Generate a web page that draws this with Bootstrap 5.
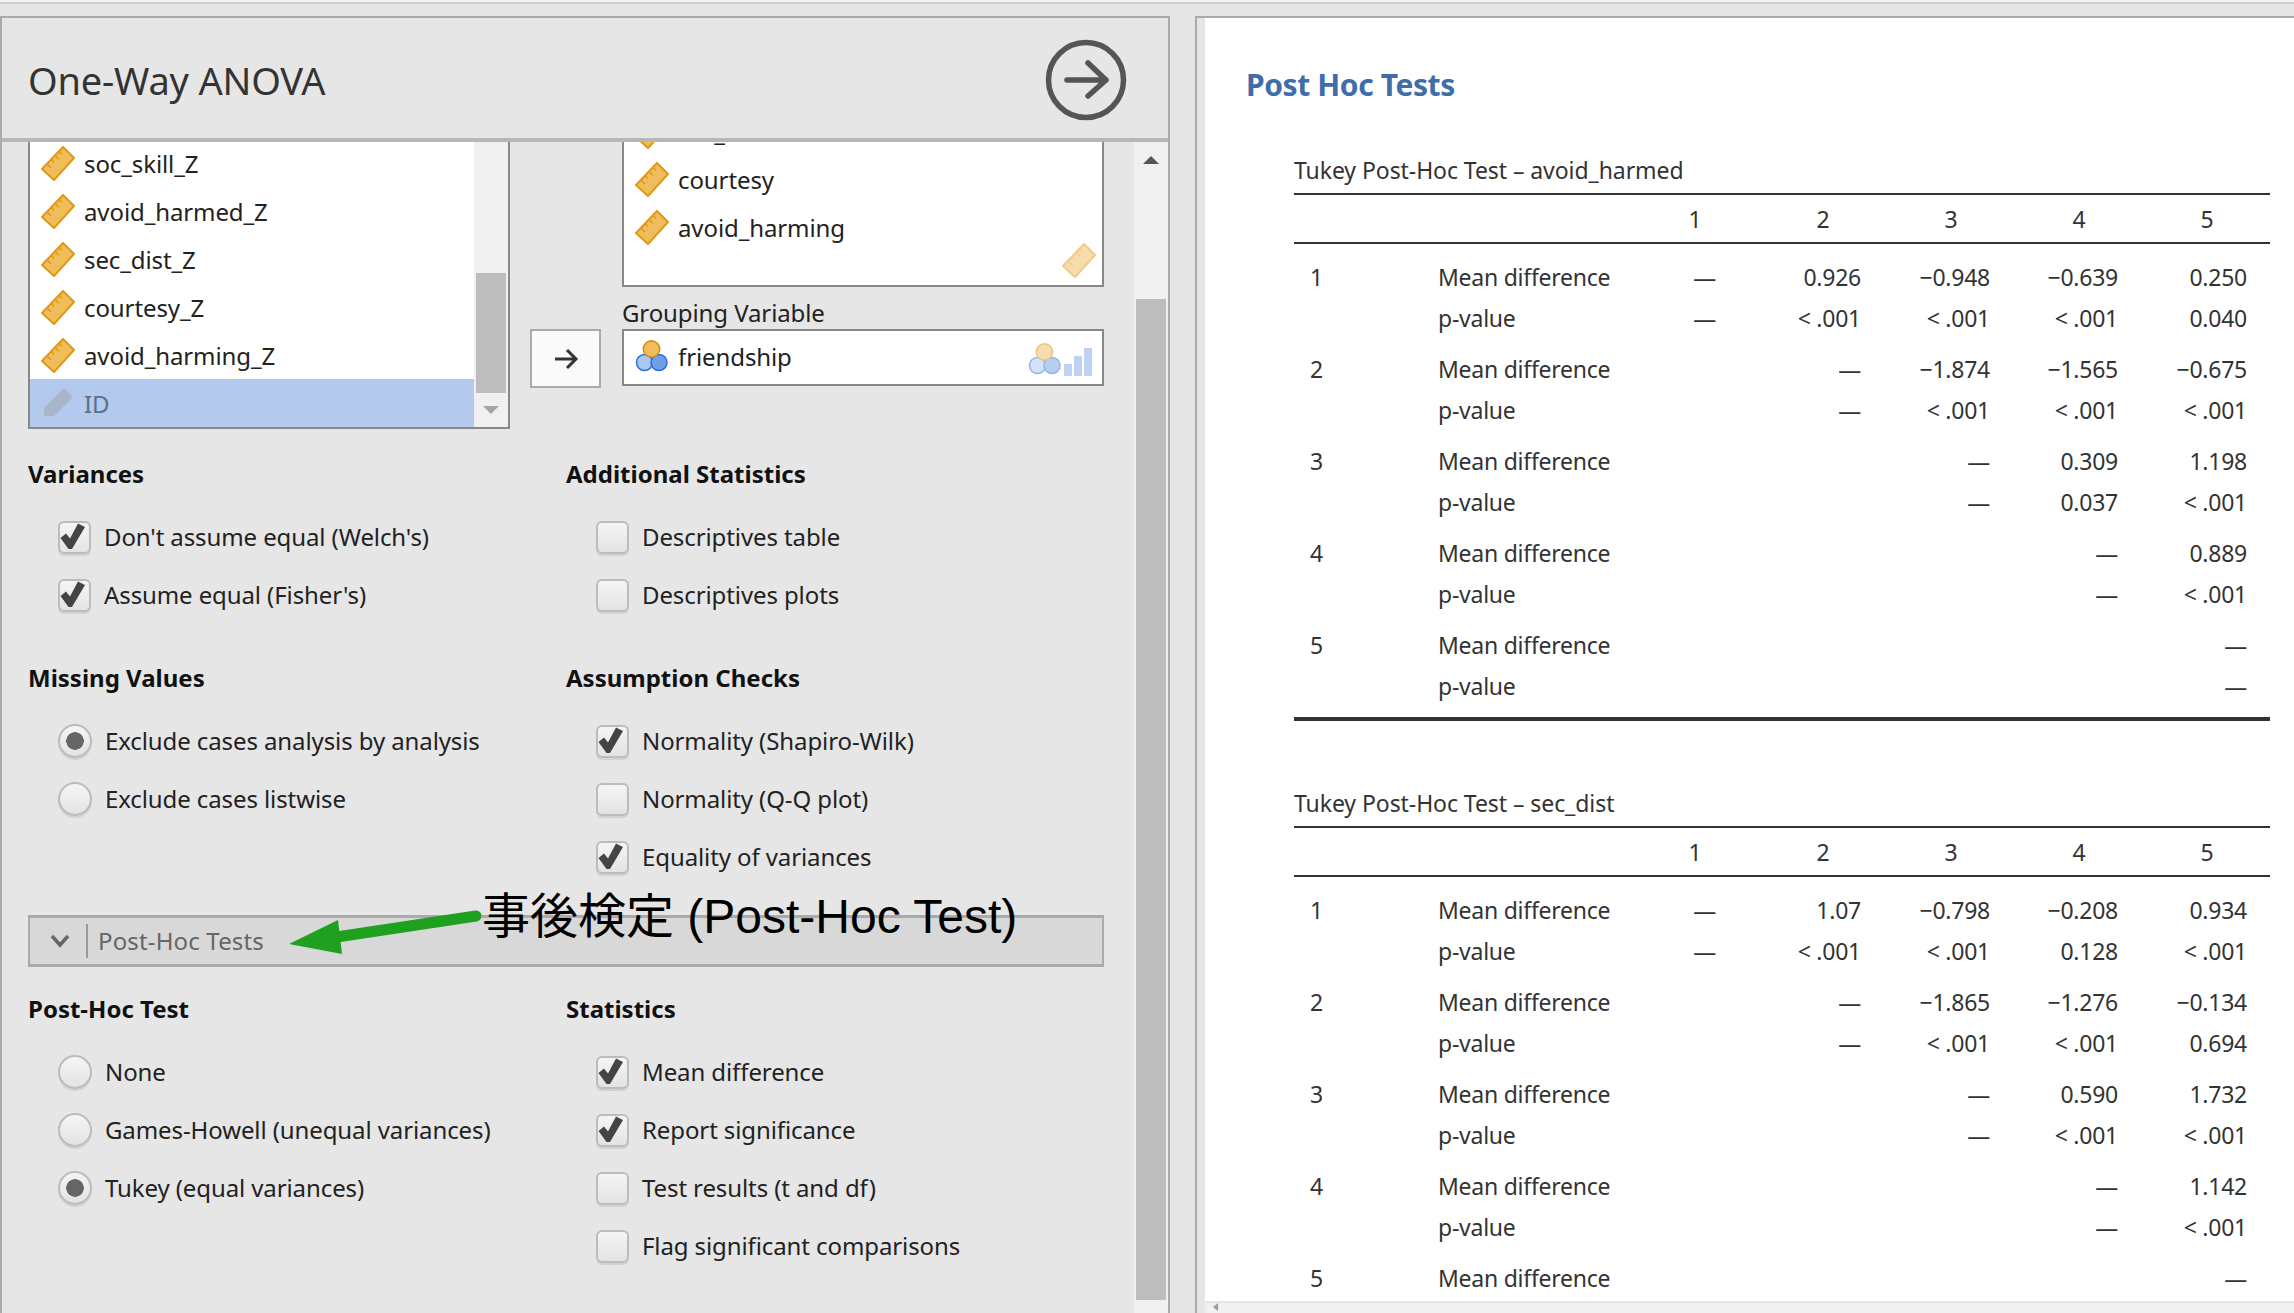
<!DOCTYPE html>
<html lang="en">
<head>
  <meta charset="UTF-8" />
  <meta name="viewport" content="width=device-width, initial-scale=1.0" />
  <title>One-Way ANOVA</title>
  <link href="https://cdn.jsdelivr.net/npm/bootstrap@5.3.0/dist/css/bootstrap.min.css" rel="stylesheet">
  <style>
    html, body { height: 1313px; overflow: hidden; }
    body {
      background: #e6e6e6;
      color: #222;
      font-family: "Noto Sans", "Open Sans", sans-serif;
      font-size: 24px;
      letter-spacing: -0.1px;
      line-height: 32px;
    }
    .top-strip { height: 4px; background: #f2f2f2; border-bottom: 2px solid #cfcfcf; margin-bottom: 12px; }
    .work-area { height: 1297px; }

    /* left options panel */
    .opt-panel { width: 1170px; border: 2px solid #aaa; border-bottom: 0; }
    .opt-head { height: 124px; border-bottom: 4px solid #b7b7b7; padding: 4px 0 0 26px; flex: none; }
    .opt-head h1 { font-size: 38px; font-weight: 400; color: #333; margin: 2px 0 0; letter-spacing: -0.2px; }
    .run-icon { width: 84px; height: 84px; margin-right: 40px; }
    .opt-scroll { min-height: 0; }
    .opt-body { width: 1132px; padding-left: 26px; padding-right: 30px; overflow: hidden; }
    .main-track { width: 34px; background: #f0f0f0; }
    .tri-box { height: 36px; }
    .tri-up { width: 0; height: 0; border-left: 8px solid transparent; border-right: 8px solid transparent; border-bottom: 8px solid #555; }
    .main-thumb { width: 30px; height: 1001px; background: #bdbdbd; margin-bottom: 13px; }

    /* variable lists */
    .var-row { height: 287px; flex: none; margin-top: 0; }
    .src-list { width: 482px; height: 287px; background: #fff; border: 2px solid #888; border-top: 0; overflow: hidden; margin-top: 0; flex: none; }
    .src-rows { width: 445px; margin-top: -3px; }
    .var-item { height: 48px; padding: 2px 0 0 11px; gap: 9px; }
    .var-item svg { flex: none; margin-top: -2px; }
    .var-item.picked { background: #b3c9ee; color: #5b6f8c; }
    .list-track { width: 34px; background: #f0f0f0; }
    .list-thumb { width: 30px; height: 120px; background: #bdbdbd; }
    .tri-box-s { height: 34px; }
    .tri-down { width: 0; height: 0; border-left: 8px solid transparent; border-right: 8px solid transparent; border-top: 8px solid #a5a5a5; }
    .move-btn { width: 71px; height: 59px; margin: 187px 21px 0 20px; background: #fafafa; border: 2px solid #aaa; border-radius: 0; padding: 0; flex: none; }
    .move-btn:hover { background: #fafafa; border-color: #aaa; }
    .dst-col { width: 482px; flex: none; }
    .dst-list { height: 145px; background: #fff; border: 2px solid #888; border-top: 0; overflow: hidden; }
    .dst-rows { margin-top: -35px; }
    .ghost-ruler { position: absolute; right: 6px; bottom: 7px; opacity: .5; }
    .group-label { line-height: 32px; margin-top: 10px; color: #222; font-size: 24px; }
    .group-box { height: 57px; background: #fff; border: 2px solid #888; }
    .group-box .var-item { height: 53px; padding: 0 0 2px 11px; }
    .ghost-types { position: absolute; right: 9px; bottom: 8px; opacity: .5; gap: 2px; }

    /* option groups */
    .opt-title { font-size: 24px; font-weight: 700; line-height: 32px; margin: 0 0 18px; color: #111; letter-spacing: 0; }
    .opt-line { height: 58px; margin: 0; padding: 0 0 0 30px; gap: 13px; }
    .tick-box, .dot-box {
      appearance: none;
      width: 33px; height: 33px; margin: 0; flex: none;
      border: 2px solid #bcbcbc;
      box-shadow: 0 2px 0 #d2d2d2;
      background: linear-gradient(#f5f5f5, #e3e3e3);
    }
    .tick-box { border-radius: 5px; }
    .tick-box:checked {
      border-color: #bcbcbc;
      background: url("data:image/svg+xml,%3Csvg xmlns='http://www.w3.org/2000/svg' viewBox='0 0 33 33'%3E%3Cpath fill='%23444' d='M2.500 17l5.500-4.500 4 5L20 2.500l7 3.500-13 22h-3.500z'/%3E%3C/svg%3E") center/33px 33px no-repeat, linear-gradient(#f5f5f5, #e3e3e3);
    }
    .dot-box { width: 34px; height: 34px; border-radius: 50%; }
    .dot-box:checked {
      border-color: #bcbcbc;
      background: radial-gradient(circle, #666 0 8.5px, transparent 9px), linear-gradient(#f5f5f5, #e3e3e3);
    }
    .opt-gap-a { margin-top: 38px; }
    .opt-gap-b { margin-top: 29px; }
    .fold-bar {
      position: relative;
      height: 52px;
      margin-top: 29px;
      margin-bottom: 26px;
      background: #d8d8d8;
      border: 2px solid #aaa;
      border-width: 3px 2px;
      color: #666;
      font-size: 24px;
      letter-spacing: 0.15px;
    }
    .fold-bar .fold-sep { width: 2px; height: 34px; background: #999; margin: 0 10px 0 16px; }
    .fold-chevron { margin-left: 20px; }
    .note-arrow { position: absolute; left: -4px; top: -3px; overflow: visible; pointer-events: none; }
    .note-text {
      position: absolute; left: 452px; top: -30px;
      font-family: "Liberation Sans", "Noto Sans CJK JP", sans-serif;
      font-size: 48px; line-height: 58px; color: #000; letter-spacing: 0; white-space: nowrap;
    }

    /* right results panel */
    .res-panel { border: 2px solid #aaa; border-width: 2px 0 0 2px; margin-left: 25px; width: 1099px; padding-left: 8px; }
    .res-page { height: 1283px; background: #fff; overflow: hidden; padding: 48px 23px 0 40px; }
    .res-bottom { height: 12px; background: #f0f0f0; padding-left: 5px; }
    .tri-left { width: 0; height: 0; border-top: 4px solid transparent; border-bottom: 4px solid transparent; border-right: 5px solid #999; margin-top: 2px; margin-left: 3px; }
    .res-title { font-size: 30px; font-weight: 700; color: #3e6da9; line-height: 38px; margin: 0 0 51px 1px; letter-spacing: -0.4px; }
    .tbl-caption { font-size: 23px; line-height: 30px; color: #333; margin-left: 49px; margin-bottom: 8px; letter-spacing: -0.07px; }
    .tukey-tbl { width: 976px; margin: 0 0 67px 49px; table-layout: fixed; letter-spacing: -0.25px; }
    .tukey-tbl th, .tukey-tbl td { padding: 0; font-size: 23px; font-weight: 400; color: #333; line-height: 41px; white-space: nowrap; background: transparent; }
    .tukey-tbl thead th { height: 49px; padding: 2px 0 0 2px; border-top: 2px solid #333; border-bottom: 2px solid #333; text-align: center; vertical-align: middle; }
    .tukey-tbl tbody { border-bottom: 4px solid #333; }
    .tukey-tbl.open-end tbody { border-bottom: 0; }
    .tukey-tbl tbody tr:first-child td { padding-top: 13px; }
    .tukey-tbl tr.pv td { padding-bottom: 10px; }
    .tukey-tbl td.idx { padding-left: 16px; }
    .tukey-tbl td.num { text-align: right; padding-right: 25px; }
    .tukey-tbl td.num:nth-child(n+5) { padding-right: 24px; }
    .tukey-tbl td.num:last-child { padding-right: 23px; }
    .tukey-tbl td.num1 { text-align: right; padding-right: 42px; }
  </style>
</head>
<body>

  <svg width="0" height="0" class="position-absolute">
    <symbol id="ruler" viewBox="0 0 34 35">
      <path d="M1 23 22 1 33 12 13 34Z" fill="#f0bd5e" stroke="#e09a12" stroke-width="2" stroke-linejoin="round"/>
      <path d="M6 18l4 4M10 13.500l3 3M14 9.500l4 4M18 5.500l3 3" stroke="#e09a12" stroke-width="1.500" fill="none"/>
    </symbol>
    <symbol id="nominal" viewBox="0 0 34 34">
      <circle cx="9.500" cy="23.500" r="8" fill="#a9c7f0" stroke="#2a6bd8" stroke-width="1.500"/>
      <circle cx="24" cy="23.500" r="8" fill="#6ea0e6" stroke="#2a6bd8" stroke-width="1.500"/>
      <circle cx="16.500" cy="10" r="8.200" fill="#f0bd5e" stroke="#d08c10" stroke-width="1.500"/>
    </symbol>
  </svg>

  <div class="top-strip"></div>

  <div class="work-area d-flex">

    <!-- Options panel -->
    <div class="opt-panel d-flex flex-column flex-none">
      <div class="opt-head d-flex align-items-center justify-content-between">
        <h1>One-Way ANOVA</h1>
        <svg class="run-icon" viewBox="0 0 84 84">
          <circle cx="42" cy="42" r="37.500" fill="none" stroke="#555" stroke-width="5.500"/>
          <path d="M23 42H62M44 25 62 42 44 58" fill="none" stroke="#555" stroke-width="5.500" stroke-linecap="round" stroke-linejoin="round"/>
        </svg>
      </div>

      <div class="opt-scroll d-flex flex-grow-1">
        <div class="opt-body">

          <!-- Variable lists -->
          <div class="var-row d-flex">
            <div class="src-list d-flex">
              <div class="src-rows">
                <div class="var-item d-flex align-items-center"><svg width="34" height="35"><use href="#ruler"/></svg><span>soc_skill_Z</span></div>
                <div class="var-item d-flex align-items-center"><svg width="34" height="35"><use href="#ruler"/></svg><span>avoid_harmed_Z</span></div>
                <div class="var-item d-flex align-items-center"><svg width="34" height="35"><use href="#ruler"/></svg><span>sec_dist_Z</span></div>
                <div class="var-item d-flex align-items-center"><svg width="34" height="35"><use href="#ruler"/></svg><span>courtesy_Z</span></div>
                <div class="var-item d-flex align-items-center"><svg width="34" height="35"><use href="#ruler"/></svg><span>avoid_harming_Z</span></div>
                <div class="var-item picked d-flex align-items-center">
                  <svg width="34" height="35" viewBox="0 0 34 35"><path d="M3 22 23 2 32 11 13 30H3Z" fill="#a8b4c8"/></svg>
                  <span>ID</span>
                </div>
              </div>
              <div class="list-track d-flex flex-column justify-content-end align-items-center">
                <div class="list-thumb"></div>
                <div class="tri-box-s d-flex align-items-center"><div class="tri-down"></div></div>
              </div>
            </div>

            <button class="btn move-btn d-flex align-items-center justify-content-center" type="button">
              <svg width="26" height="24" viewBox="0 0 26 24"><path d="M2 12H23M14 3 23 12 14 21" fill="none" stroke="#333" stroke-width="3"/></svg>
            </button>

            <div class="dst-col">
              <div class="dst-list position-relative">
                <div class="dst-rows">
                  <div class="var-item d-flex align-items-center"><svg width="34" height="35"><use href="#ruler"/></svg><span>sec_dist</span></div>
                  <div class="var-item d-flex align-items-center"><svg width="34" height="35"><use href="#ruler"/></svg><span>courtesy</span></div>
                  <div class="var-item d-flex align-items-center"><svg width="34" height="35"><use href="#ruler"/></svg><span>avoid_harming</span></div>
                </div>
                <svg class="ghost-ruler" width="34" height="35"><use href="#ruler"/></svg>
              </div>
              <div class="group-label">Grouping Variable</div>
              <div class="group-box position-relative">
                <div class="var-item d-flex align-items-center"><svg width="34" height="34"><use href="#nominal"/></svg><span>friendship</span></div>
                <div class="ghost-types d-flex align-items-end">
                  <svg width="34" height="34"><use href="#nominal"/></svg>
                  <svg width="29" height="28" viewBox="0 0 29 28"><path d="M0 16h8v12H0zM10 8h8v20h-8zM20 0h8v28h-8z" fill="#7fa8e8"/></svg>
                </div>
              </div>
            </div>
          </div>

          <!-- Variances / Additional -->
          <div class="row g-0 opt-gap-b">
            <div class="col-6">
              <p class="opt-title">Variances</p>
              <label class="opt-line d-flex align-items-center"><input class="form-check-input tick-box" type="checkbox" checked><span>Don't assume equal (Welch's)</span></label>
              <label class="opt-line d-flex align-items-center"><input class="form-check-input tick-box" type="checkbox" checked><span>Assume equal (Fisher's)</span></label>
              <p class="opt-title opt-gap-a">Missing Values</p>
              <label class="opt-line d-flex align-items-center"><input class="form-check-input dot-box" type="radio" name="missing" checked><span>Exclude cases analysis by analysis</span></label>
              <label class="opt-line d-flex align-items-center"><input class="form-check-input dot-box" type="radio" name="missing"><span>Exclude cases listwise</span></label>
            </div>
            <div class="col-6">
              <p class="opt-title">Additional Statistics</p>
              <label class="opt-line d-flex align-items-center"><input class="form-check-input tick-box" type="checkbox"><span>Descriptives table</span></label>
              <label class="opt-line d-flex align-items-center"><input class="form-check-input tick-box" type="checkbox"><span>Descriptives plots</span></label>
              <p class="opt-title opt-gap-a">Assumption Checks</p>
              <label class="opt-line d-flex align-items-center"><input class="form-check-input tick-box" type="checkbox" checked><span>Normality (Shapiro-Wilk)</span></label>
              <label class="opt-line d-flex align-items-center"><input class="form-check-input tick-box" type="checkbox"><span>Normality (Q-Q plot)</span></label>
              <label class="opt-line d-flex align-items-center"><input class="form-check-input tick-box" type="checkbox" checked><span>Equality of variances</span></label>
            </div>
          </div>

          <!-- Post-Hoc fold -->
          <div class="fold-bar d-flex align-items-center">
            <svg class="fold-chevron" width="20" height="14" viewBox="0 0 20 14"><path d="M2 2 10 11 18 2" fill="none" stroke="#666" stroke-width="3.500"/></svg>
            <div class="fold-sep"></div>
            <span>Post-Hoc Tests</span>
            <svg class="note-arrow" width="10" height="10">
              <path d="M314 21.500 450 1" stroke="#1fa01f" stroke-width="11" stroke-linecap="round" fill="none"/>
              <path d="M263 29 312 5 316 39Z" fill="#1fa01f"/>
            </svg>
            <div class="note-text">事後検定 (Post-Hoc Test)</div>
          </div>

          <div class="row g-0">
            <div class="col-6">
              <p class="opt-title">Post-Hoc Test</p>
              <label class="opt-line d-flex align-items-center"><input class="form-check-input dot-box" type="radio" name="posthoc"><span>None</span></label>
              <label class="opt-line d-flex align-items-center"><input class="form-check-input dot-box" type="radio" name="posthoc"><span>Games-Howell (unequal variances)</span></label>
              <label class="opt-line d-flex align-items-center"><input class="form-check-input dot-box" type="radio" name="posthoc" checked><span>Tukey (equal variances)</span></label>
            </div>
            <div class="col-6">
              <p class="opt-title">Statistics</p>
              <label class="opt-line d-flex align-items-center"><input class="form-check-input tick-box" type="checkbox" checked><span>Mean difference</span></label>
              <label class="opt-line d-flex align-items-center"><input class="form-check-input tick-box" type="checkbox" checked><span>Report significance</span></label>
              <label class="opt-line d-flex align-items-center"><input class="form-check-input tick-box" type="checkbox"><span>Test results (t and df)</span></label>
              <label class="opt-line d-flex align-items-center"><input class="form-check-input tick-box" type="checkbox"><span>Flag significant comparisons</span></label>
            </div>
          </div>
        </div>

        <!-- Panel scrollbar -->
        <div class="main-track d-flex flex-column align-items-center">
          <div class="tri-box d-flex align-items-center"><div class="tri-up"></div></div>
          <div class="main-thumb mt-auto"></div>
        </div>
      </div>
    </div>

    <!-- Results panel -->
    <div class="res-panel">
      <div class="res-page">
        <h2 class="res-title">Post Hoc Tests</h2>

        <div class="tbl-caption">Tukey Post-Hoc Test – avoid_harmed</div>
        <table class="table table-borderless tukey-tbl">
          <colgroup><col style="width:144px"><col style="width:192px"><col style="width:128px"><col style="width:128px"><col style="width:128px"><col style="width:128px"><col style="width:128px"></colgroup>
          <thead><tr><th></th><th></th><th>1</th><th>2</th><th>3</th><th>4</th><th>5</th></tr></thead>
          <tbody>
            <tr><td class="idx">1</td><td>Mean difference</td><td class="num1">—</td><td class="num">0.926</td><td class="num">−0.948</td><td class="num">−0.639</td><td class="num">0.250</td></tr>
            <tr class="pv"><td></td><td>p-value</td><td class="num1">—</td><td class="num">&lt; .001</td><td class="num">&lt; .001</td><td class="num">&lt; .001</td><td class="num">0.040</td></tr>
            <tr><td class="idx">2</td><td>Mean difference</td><td></td><td class="num">—</td><td class="num">−1.874</td><td class="num">−1.565</td><td class="num">−0.675</td></tr>
            <tr class="pv"><td></td><td>p-value</td><td></td><td class="num">—</td><td class="num">&lt; .001</td><td class="num">&lt; .001</td><td class="num">&lt; .001</td></tr>
            <tr><td class="idx">3</td><td>Mean difference</td><td></td><td></td><td class="num">—</td><td class="num">0.309</td><td class="num">1.198</td></tr>
            <tr class="pv"><td></td><td>p-value</td><td></td><td></td><td class="num">—</td><td class="num">0.037</td><td class="num">&lt; .001</td></tr>
            <tr><td class="idx">4</td><td>Mean difference</td><td></td><td></td><td></td><td class="num">—</td><td class="num">0.889</td></tr>
            <tr class="pv"><td></td><td>p-value</td><td></td><td></td><td></td><td class="num">—</td><td class="num">&lt; .001</td></tr>
            <tr><td class="idx">5</td><td>Mean difference</td><td></td><td></td><td></td><td></td><td class="num">—</td></tr>
            <tr class="pv"><td></td><td>p-value</td><td></td><td></td><td></td><td></td><td class="num">—</td></tr>
          </tbody>
        </table>

        <div class="tbl-caption">Tukey Post-Hoc Test – sec_dist</div>
        <table class="table table-borderless tukey-tbl open-end">
          <colgroup><col style="width:144px"><col style="width:192px"><col style="width:128px"><col style="width:128px"><col style="width:128px"><col style="width:128px"><col style="width:128px"></colgroup>
          <thead><tr><th></th><th></th><th>1</th><th>2</th><th>3</th><th>4</th><th>5</th></tr></thead>
          <tbody>
            <tr><td class="idx">1</td><td>Mean difference</td><td class="num1">—</td><td class="num">1.07</td><td class="num">−0.798</td><td class="num">−0.208</td><td class="num">0.934</td></tr>
            <tr class="pv"><td></td><td>p-value</td><td class="num1">—</td><td class="num">&lt; .001</td><td class="num">&lt; .001</td><td class="num">0.128</td><td class="num">&lt; .001</td></tr>
            <tr><td class="idx">2</td><td>Mean difference</td><td></td><td class="num">—</td><td class="num">−1.865</td><td class="num">−1.276</td><td class="num">−0.134</td></tr>
            <tr class="pv"><td></td><td>p-value</td><td></td><td class="num">—</td><td class="num">&lt; .001</td><td class="num">&lt; .001</td><td class="num">0.694</td></tr>
            <tr><td class="idx">3</td><td>Mean difference</td><td></td><td></td><td class="num">—</td><td class="num">0.590</td><td class="num">1.732</td></tr>
            <tr class="pv"><td></td><td>p-value</td><td></td><td></td><td class="num">—</td><td class="num">&lt; .001</td><td class="num">&lt; .001</td></tr>
            <tr><td class="idx">4</td><td>Mean difference</td><td></td><td></td><td></td><td class="num">—</td><td class="num">1.142</td></tr>
            <tr class="pv"><td></td><td>p-value</td><td></td><td></td><td></td><td class="num">—</td><td class="num">&lt; .001</td></tr>
            <tr><td class="idx">5</td><td>Mean difference</td><td></td><td></td><td></td><td></td><td class="num">—</td></tr>
          </tbody>
        </table>
      </div>
      <div class="res-bottom"><div class="tri-left"></div></div>
    </div>
  </div>

  <script src="https://cdn.jsdelivr.net/npm/bootstrap@5.3.0/dist/js/bootstrap.bundle.min.js"></script>
</body>
</html>
